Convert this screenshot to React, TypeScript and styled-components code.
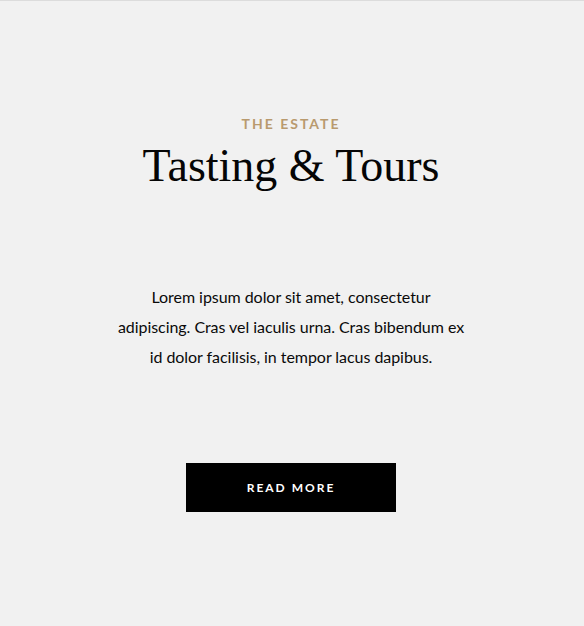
import React from "react";
import styled, { createGlobalStyle } from "styled-components";

const Global = createGlobalStyle`
  html, body { margin: 0; padding: 0; background: #f1f1f1; }
  body { font-family: "Lato", "Liberation Sans", sans-serif; }
`;

const Section = styled.section`
  box-sizing: border-box;
  width: 584px;
  height: 626px;
  border-top: 1px solid #dcdcdc;
  background: #f1f1f1;
  display: flex;
  flex-direction: column;
  align-items: center;
  padding: 113px 2px 0 0;
`;

const Eyebrow = styled.div`
  font-family: "Lato", sans-serif;
  font-weight: 700;
  font-size: 14px;
  letter-spacing: 2px;
  line-height: 20px;
  color: #b99a6e;
  text-transform: uppercase;
`;

const Title = styled.h1`
  margin: 6px 0 0;
  font-family: "Liberation Serif", "Times New Roman", serif;
  font-weight: 400;
  font-size: 46px;
  line-height: 52px;
  color: #050505;
`;

const Body = styled.p`
  margin: 90px 0 0;
  width: 350px;
  text-align: center;
  font-family: "Lato", sans-serif;
  font-size: 16px;
  letter-spacing: -0.05px;
  line-height: 30px;
  color: #0a0a0a;
`;

const Button = styled.a`
  margin-top: 91px;
  width: 210px;
  height: 49px;
  display: flex;
  align-items: center;
  justify-content: center;
  background: #000;
  color: #fff;
  font-family: "Lato", sans-serif;
  font-weight: 700;
  font-size: 12px;
  letter-spacing: 2px;
  text-transform: uppercase;
  text-decoration: none;
`;

export default function App() {
  return (
    <>
      <Global />
      <Section>
        <Eyebrow>The Estate</Eyebrow>
        <Title>Tasting &amp; Tours</Title>
        <Body>
          Lorem ipsum dolor sit amet, consectetur adipiscing. Cras vel iaculis urna. Cras bibendum ex id dolor facilisis, in tempor lacus dapibus.
        </Body>
        <Button href="#">Read More</Button>
      </Section>
    </>
  );
}
